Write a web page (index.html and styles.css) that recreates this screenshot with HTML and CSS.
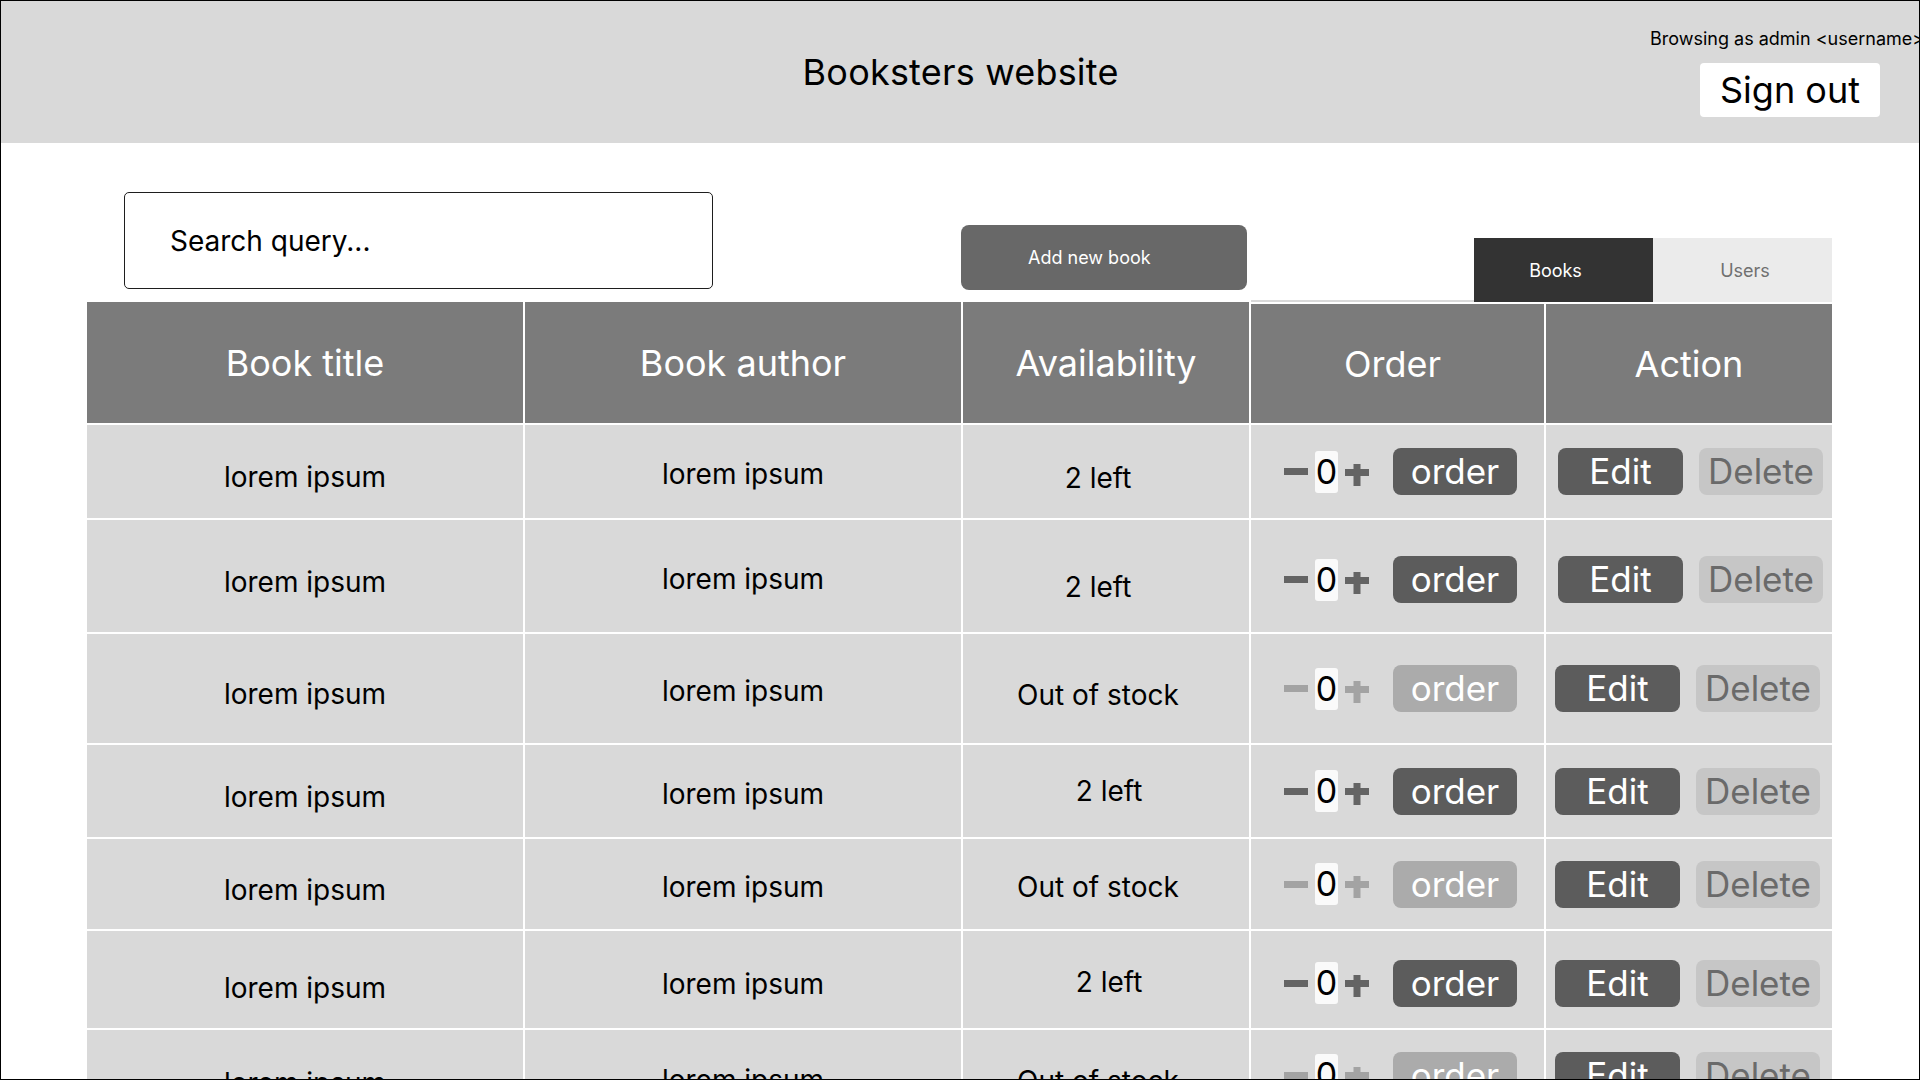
FILE: index.html
```html
<!DOCTYPE html>
<html lang="en">
<head>
<meta charset="utf-8">
<title>Booksters website</title>
<link rel="stylesheet" href="styles.css">
</head>
<body>
<div class="frame">
  <header class="topbar">
    <h1 class="site-title">Booksters website</h1>
    <div class="account">
      <p class="account-label">Browsing as admin &lt;username&gt;</p>
      <button class="signout">Sign out</button>
    </div>
  </header>
  <main class="content">
    <div class="toolbar">
      <div class="search">Search query...</div>
      <button class="add-btn">Add new book</button>
      <div class="tab-line"></div>
      <div class="tabs">
        <button class="tab tab-active">Books</button>
        <button class="tab tab-users">Users</button>
      </div>
    </div>
    <div class="table">
      <div class="th">Book title</div>
      <div class="th">Book author</div>
      <div class="th">Availability</div>
      <div class="th th-b th-order">Order</div>
      <div class="th th-b">Action</div>

      <div class="td c-title">lorem ipsum</div>
      <div class="td c-author">lorem ipsum</div>
      <div class="td avail-a">2 left</div>
      <div class="td order-cell">
        <svg class="minus" viewBox="0 0 24 7" width="24" height="7"><rect x="0" y="0" width="24" height="7"/></svg>
        <span class="qty">0</span>
        <svg class="plus" viewBox="0 0 24 30" width="24" height="30"><rect x="0" y="12" width="24" height="7"/><rect x="8.5" y="7" width="7" height="22"/></svg>
        <button class="btn btn-order">order</button>
      </div>
      <div class="td action-cell">
        <button class="btn btn-edit">Edit</button>
        <button class="btn btn-delete">Delete</button>
      </div>

      <div class="td c-title">lorem ipsum</div>
      <div class="td c-author">lorem ipsum</div>
      <div class="td avail-a avail-low">2 left</div>
      <div class="td order-cell cell-low">
        <svg class="minus" viewBox="0 0 24 7" width="24" height="7"><rect x="0" y="0" width="24" height="7"/></svg>
        <span class="qty">0</span>
        <svg class="plus" viewBox="0 0 24 30" width="24" height="30"><rect x="0" y="12" width="24" height="7"/><rect x="8.5" y="7" width="7" height="22"/></svg>
        <button class="btn btn-order">order</button>
      </div>
      <div class="td action-cell cell-low">
        <button class="btn btn-edit">Edit</button>
        <button class="btn btn-delete">Delete</button>
      </div>

      <div class="td c-title">lorem ipsum</div>
      <div class="td c-author">lorem ipsum</div>
      <div class="td avail-a">Out of stock</div>
      <div class="td order-cell disabled">
        <svg class="minus" viewBox="0 0 24 7" width="24" height="7"><rect x="0" y="0" width="24" height="7"/></svg>
        <span class="qty">0</span>
        <svg class="plus" viewBox="0 0 24 30" width="24" height="30"><rect x="0" y="12" width="24" height="7"/><rect x="8.5" y="7" width="7" height="22"/></svg>
        <button class="btn btn-order">order</button>
      </div>
      <div class="td action-cell action-shift">
        <button class="btn btn-edit">Edit</button>
        <button class="btn btn-delete">Delete</button>
      </div>

      <div class="td c-title">lorem ipsum</div>
      <div class="td c-author">lorem ipsum</div>
      <div class="td avail-b">2 left</div>
      <div class="td order-cell">
        <svg class="minus" viewBox="0 0 24 7" width="24" height="7"><rect x="0" y="0" width="24" height="7"/></svg>
        <span class="qty">0</span>
        <svg class="plus" viewBox="0 0 24 30" width="24" height="30"><rect x="0" y="12" width="24" height="7"/><rect x="8.5" y="7" width="7" height="22"/></svg>
        <button class="btn btn-order">order</button>
      </div>
      <div class="td action-cell action-shift">
        <button class="btn btn-edit">Edit</button>
        <button class="btn btn-delete">Delete</button>
      </div>

      <div class="td c-title">lorem ipsum</div>
      <div class="td c-author">lorem ipsum</div>
      <div class="td avail-a avail-mid">Out of stock</div>
      <div class="td order-cell disabled">
        <svg class="minus" viewBox="0 0 24 7" width="24" height="7"><rect x="0" y="0" width="24" height="7"/></svg>
        <span class="qty">0</span>
        <svg class="plus" viewBox="0 0 24 30" width="24" height="30"><rect x="0" y="12" width="24" height="7"/><rect x="8.5" y="7" width="7" height="22"/></svg>
        <button class="btn btn-order">order</button>
      </div>
      <div class="td action-cell action-shift">
        <button class="btn btn-edit">Edit</button>
        <button class="btn btn-delete">Delete</button>
      </div>

      <div class="td c-title c-title-low">lorem ipsum</div>
      <div class="td c-author c-author-low">lorem ipsum</div>
      <div class="td avail-b avail-mid">2 left</div>
      <div class="td order-cell cell-low">
        <svg class="minus" viewBox="0 0 24 7" width="24" height="7"><rect x="0" y="0" width="24" height="7"/></svg>
        <span class="qty">0</span>
        <svg class="plus" viewBox="0 0 24 30" width="24" height="30"><rect x="0" y="12" width="24" height="7"/><rect x="8.5" y="7" width="7" height="22"/></svg>
        <button class="btn btn-order">order</button>
      </div>
      <div class="td action-cell action-shift cell-low">
        <button class="btn btn-edit">Edit</button>
        <button class="btn btn-delete">Delete</button>
      </div>

      <div class="td c-title c-title-low">lorem ipsum</div>
      <div class="td c-author c-author-low">lorem ipsum</div>
      <div class="td avail-a">Out of stock</div>
      <div class="td order-cell disabled">
        <svg class="minus" viewBox="0 0 24 7" width="24" height="7"><rect x="0" y="0" width="24" height="7"/></svg>
        <span class="qty">0</span>
        <svg class="plus" viewBox="0 0 24 30" width="24" height="30"><rect x="0" y="12" width="24" height="7"/><rect x="8.5" y="7" width="7" height="22"/></svg>
        <button class="btn btn-order">order</button>
      </div>
      <div class="td action-cell action-shift">
        <button class="btn btn-edit">Edit</button>
        <button class="btn btn-delete">Delete</button>
      </div>
    </div>
  </main>
</div>
</body>
</html>
```

FILE: styles.css
```css
* { box-sizing: border-box; }

html, body {
  margin: 0;
  padding: 0;
  background: #fff;
}

body {
  font-family: Inter, "Noto Sans", sans-serif;
  color: #000;
}

.frame {
  width: 1920px;
  height: 1080px;
  border: 1px solid #000;
  overflow: hidden;
}

/* ---------- top bar ---------- */
.topbar {
  height: 142px;
  background: #d9d9d9;
  display: grid;
  grid-template-columns: 1649px 1fr;
}

.site-title {
  grid-column: 1 / -1;
  grid-row: 1;
  align-self: center;
  justify-self: center;
  margin: 0 0 0 -4px;
  font-size: 36px;
  font-weight: 400;
  line-height: 44px;
  letter-spacing: 0.2px;
}

.account {
  grid-column: 2;
  grid-row: 1;
  padding-top: 27px;
  white-space: nowrap;
}

.account-label {
  margin: 0;
  font-size: 18px;
  line-height: 22px;
}

.signout {
  display: block;
  margin: 13px 0 0 50px;
  width: 180px;
  height: 54px;
  padding: 0;
  border: 0;
  border-radius: 4px;
  background: #fff;
  color: #000;
  font-family: inherit;
  font-size: 36px;
  line-height: 54px;
}

/* ---------- content ---------- */
.content {
  padding: 49px 0 0 86px;
}

.toolbar {
  display: flex;
  align-items: flex-start;
  width: 1745px;
  height: 110px;
}

.search {
  margin-left: 37px;
  width: 589px;
  height: 97px;
  border: 1px solid #1e1e1e;
  border-radius: 5px;
  padding-left: 45px;
  display: flex;
  align-items: center;
  font-size: 28px;
}

.add-btn {
  margin: 33px 0 0 248px;
  width: 286px;
  height: 65px;
  padding: 0 0 0 67px;
  border: 0;
  border-radius: 8px;
  background: #686868;
  color: #fff;
  font-family: inherit;
  font-size: 18px;
  text-align: left;
}

.tab-line {
  flex: 1;
  align-self: flex-end;
  margin-left: 4px;
  height: 2px;
  background: #d9d9d9;
}

.tabs {
  display: flex;
  margin-top: 46px;
  height: 64px;
}

.tab {
  width: 179px;
  height: 64px;
  padding: 0;
  border: 0;
  background: #ebebeb;
  color: #707070;
  font-family: inherit;
  font-size: 18px;
}

.tab-active {
  background: #333;
  color: #fff;
  padding-right: 16px;
}

.tab-users {
  padding-left: 5px;
}

/* ---------- table ---------- */
.table {
  display: grid;
  width: 1745px;
  grid-template-columns: 436px 436px 286px 293px 286px;
  grid-template-rows: 121px 93px 112px 109px 92px 90px 97px 90px;
  gap: 2px;
  background: #fff;
}

.th {
  background: #7b7b7b;
  color: #fff;
  font-size: 36px;
  display: flex;
  align-items: center;
  justify-content: center;
}

.th-b {
  margin-top: 2px;
}

.th-order {
  padding-right: 10px;
}

.td {
  background: #d9d9d9;
  font-size: 28px;
  display: flex;
  align-items: center;
  justify-content: center;
}

.c-title { padding-top: 11px; }
.c-title-low { padding-top: 16px; }
.c-author { padding-top: 5px; }
.c-author-low { padding-top: 9px; }

.avail-a { padding: 12px 16px 0 0; }
.avail-b { padding: 0 0 0 6px; }
.avail-low { padding-top: 22px; }
.avail-mid { padding-top: 5px; }

.order-cell {
  justify-content: flex-start;
  padding-left: 33px;
  color: #646464;
}

.cell-low { padding-top: 7px; }

.order-cell.disabled {
  color: #a3a3a3;
}

.minus, .plus {
  fill: currentColor;
  flex: none;
}

.minus { margin-right: 7px; }

.qty {
  flex: none;
  width: 23px;
  height: 42px;
  border-radius: 3px;
  background: #fafafa;
  color: #000;
  font-size: 34px;
  line-height: 42px;
  text-align: center;
  margin-right: 7px;
  display: flex;
  justify-content: center;
}

.plus { margin-right: 24px; }

.btn {
  flex: none;
  height: 47px;
  padding: 0;
  border: 0;
  border-radius: 8px;
  font-family: inherit;
  font-size: 35px;
  line-height: 47px;
  color: #fff;
}

.btn-order {
  width: 124px;
  background: #5c5c5c;
}

.disabled .btn-order {
  background: #ababab;
}

.action-cell {
  justify-content: flex-start;
  padding-left: 12px;
  gap: 16px;
}

.action-shift {
  padding-left: 9px;
}

.btn-edit {
  width: 125px;
  background: #5c5c5c;
}

.btn-delete {
  width: 124px;
  background: #c6c6c6;
  color: #6a6a6a;
}
```
